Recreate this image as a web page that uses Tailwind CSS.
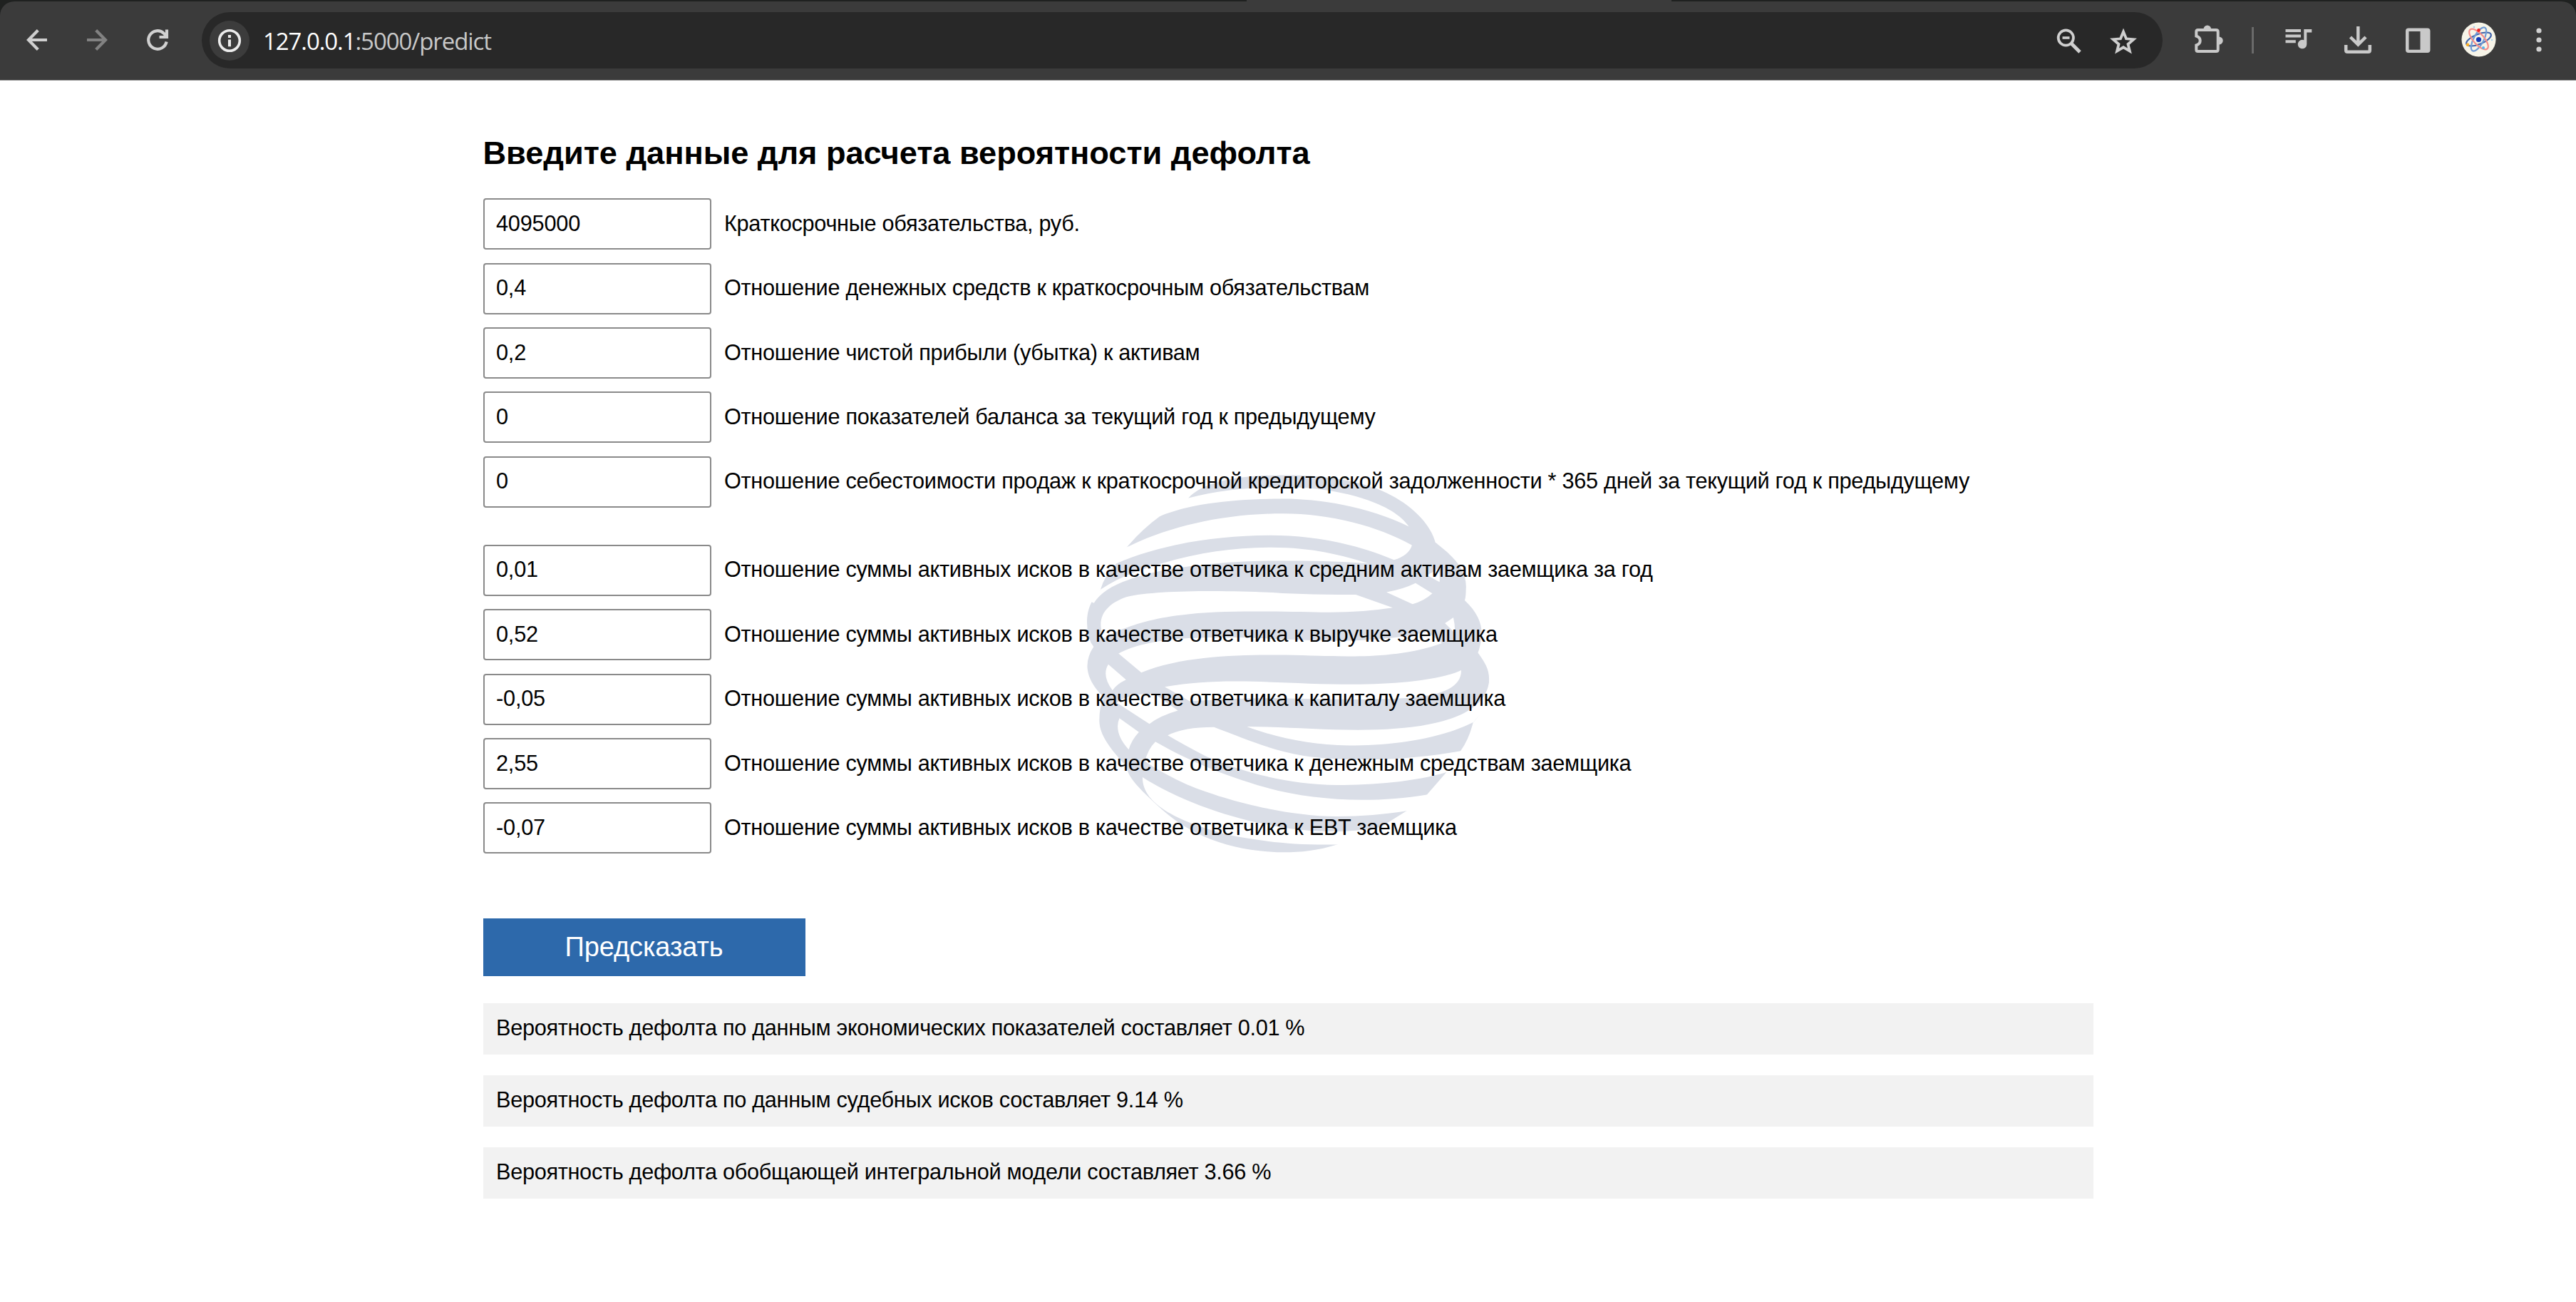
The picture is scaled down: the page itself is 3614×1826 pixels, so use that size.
<!DOCTYPE html>
<html lang="ru">
<head>
<meta charset="utf-8">
<title>127.0.0.1:5000/predict</title>
<script src="https://cdn.jsdelivr.net/npm/@tailwindcss/browser@4"></script>
</head>
<body class="bg-white text-black font-['Liberation_Sans',Arial,sans-serif] overflow-hidden">
<div class="relative w-[3614px] h-[1826px] overflow-hidden">

<!-- Browser toolbar -->
<header class="h-[113px] bg-[#1f2120]">
  <div class="h-[2px] flex"><div class="ml-[1749px] w-[596px] bg-[#3b3b3b]"></div></div>
  <div class="h-[111px] bg-[#3b3b3b] rounded-t-[20px] border-b border-[#8a8a8a] flex items-start pt-[15px] text-[#c9c9c9]">
    <svg class="ml-[30px] w-[45px] h-[80px] shrink-0" viewBox="30 17 45 80" fill="none" stroke="#d0d0d0" stroke-width="4.2"><path d="M66 56H41M53.3 42.5L40 56L53.3 69.5"/></svg>
    <svg class="ml-[40px] w-[45px] h-[80px] shrink-0" viewBox="115 17 45 80" fill="none" stroke="#828282" stroke-width="4.2"><path d="M122 56H147M134.7 42.5L148 56L134.7 69.5"/></svg>
    <svg class="ml-[40px] w-[50px] h-[80px] shrink-0" viewBox="200 17 50 80" fill="none" stroke="#d0d0d0" stroke-width="4.2"><path d="M233.6 58.5A12.8 12.8 0 1 1 229.8 46.7L234 51.5M234 41.5V52H223.500"/></svg>

    <div class="ml-[32.500px] w-[2751px] h-[79px] rounded-full bg-[#282828] flex items-center shrink-0">
      <div class="ml-[11.500px] size-[56px] rounded-full bg-[#3c3c3c] shrink-0">
        <svg class="size-[56px]" viewBox="0 0 56 56"><circle cx="28" cy="28" r="14.300" fill="none" stroke="#ececec" stroke-width="3.600"/><path d="M26 26.500h4v9.800h-4zM26 20h4v4h-4z" fill="#ececec"/></svg>
      </div>
      <div class="ml-[19px] pt-[2px] text-[33px] leading-[40px] tracking-[-1.080px] font-['Open_Sans',sans-serif] text-[#c8c8c8] whitespace-nowrap"><span class="text-white">127.0.0.1</span>:5000/predict</div>
      <svg class="ml-auto w-[50px] h-[79px] shrink-0" viewBox="2880 17 50 79" fill="none" stroke="#cfcfcf"><circle cx="2898.300" cy="53" r="10.600" stroke-width="3.800"/><path d="M2906 61L2918 73" stroke-width="5"/><path d="M2893.500 53h10" stroke-width="3.600"/></svg>
      <svg class="ml-[24px] mr-[30px] w-[50px] h-[79px] shrink-0" viewBox="2954 17 50 79" fill="none" stroke="#cfcfcf" stroke-width="3.800"><path d="M2979 44.500L2983 54.300L2993.300 55.200L2985.500 62L2987.900 71.600L2979 66.300L2970.100 71.600L2972.500 62L2964.700 55.200L2975 54.300Z"/></svg>
    </div>

    <svg class="ml-[40.500px] w-[50px] h-[80px] shrink-0" viewBox="3074 17 50 80"><path d="M3083.500 42H3109Q3111.700 42 3111.700 44.500V69.500Q3111.700 72 3109 72H3083.500Q3081.300 72 3081.300 69.500V63.500C3088.500 61 3088.500 53 3081.300 50.500V44.500Q3081.300 42 3083.500 42Z" fill="none" stroke="#c9c9c9" stroke-width="4"/><path d="M3091.500 41a5.300 5.600 0 0 1 10.600 0ZM3113 51.500a5.700 5.500 0 0 1 0 11Z" fill="#c9c9c9"/></svg>
    <div class="ml-[35px] mt-[21px] w-[2.500px] h-[37px] bg-[#6a6a6a] shrink-0"></div>
    <svg class="ml-[38.500px] w-[50px] h-[80px] shrink-0" viewBox="3200 17 50 80" fill="#c9c9c9"><path d="M3206.500 41h21.500v4h-21.500zM3206.500 48.600h21.500v4h-21.500zM3206.500 56.200h14.300v4h-14.300zM3232.300 41h11v4.500h-7V62a6.300 6.300 0 1 1-4-5.800z"/></svg>
    <svg class="ml-[34px] w-[50px] h-[80px] shrink-0" viewBox="3284 17 50 80" fill="none" stroke="#c9c9c9" stroke-width="4.500"><path d="M3308.300 37V61M3297.500 52L3308.300 62.500L3319 52M3291.200 63V70.500Q3291.200 72.800 3293.500 72.800H3322.500Q3324.800 72.800 3324.800 70.500V63"/></svg>
    <svg class="ml-[36px] w-[46px] h-[80px] shrink-0" viewBox="3370 17 46 80" fill="#c9c9c9"><path fill-rule="evenodd" d="M3379 39.500H3405.500Q3409.500 39.500 3409.500 43.500V70Q3409.500 74 3405.500 74H3379Q3375 74 3375 70V43.500Q3375 39.500 3379 39.500ZM3379.500 44V69.700H3395.500V44Z"/></svg>
    <svg class="ml-[36px] w-[52px] h-[80px] shrink-0" viewBox="3452 17 52 80" fill="none" stroke-width="2.200"><circle cx="3477.500" cy="55.500" r="24" fill="#f6f4e8"/><ellipse cx="3477.500" cy="55" rx="18.500" ry="7" transform="rotate(-22 3477.500 55)" stroke="#3f63ab"/><ellipse cx="3477.500" cy="55" rx="18.500" ry="7" transform="rotate(-62 3477.500 55)" stroke="#6f9bd6"/><ellipse cx="3477.500" cy="55" rx="18" ry="7.500" transform="rotate(48 3477.500 55)" stroke="#f58e8a"/><circle cx="3477.500" cy="55.500" r="3.600" fill="#1238b8"/><circle cx="3477.500" cy="42.500" r="2.400" fill="#f02424"/><circle cx="3462" cy="62.700" r="2.300" fill="#fbb026"/><circle cx="3484" cy="67" r="2" fill="#55b4ec"/><circle cx="3471" cy="38" r="1.300" fill="#a9c8ee"/><circle cx="3496" cy="56" r="1.200" fill="#9fd0f0"/></svg>
    <svg class="ml-[46px] w-[24px] h-[80px] shrink-0" viewBox="3550 17 24 80" fill="#d0d0d0"><circle cx="3562" cy="43" r="3.600"/><circle cx="3562" cy="56" r="3.600"/><circle cx="3562" cy="69" r="3.600"/></svg>
  </div>
</header>

<!-- Globe watermark -->
<svg class="absolute left-[1480px] top-[620px] w-[660px] h-[600px]" viewBox="0 0 1568 1568" preserveAspectRatio="none" fill="#fff">
  <path fill="#dadee7" d="M445 205C490 150 600 122 740 122C900 118 1040 145 1120 195C1200 240 1255 310 1268 368C1330 420 1375 470 1370 540Q1370 565 1366 580C1410 625 1425 670 1422 710Q1418 750 1410 772C1435 810 1448 835 1447 870C1447 950 1420 1000 1394 1027Q1380 1090 1352 1132L1305 1210L1240 1292L1172 1352L1080 1415L940 1475C870 1500 800 1505 740 1503C560 1495 440 1430 350 1340C280 1270 240 1225 240 1190C180 1120 148 1070 148 1020Q148 970 163 935C120 890 108 850 108 820Q108 785 129 750Q107 720 107 662C107 600 130 570 152 540Q165 490 205 445L240 385Q290 320 350 272Z"/>
  <path d="M445 205C560 170 700 162 800 166C960 172 1130 225 1180 310C1040 235 880 208 760 208C600 208 450 225 350 272L320 240L430 180Z"/>
  <path d="M240 385C380 310 560 262 760 262C920 262 1080 310 1190 378Q1180 415 1130 432C1000 370 850 342 720 342C540 342 350 375 205 445L180 430Z"/>
  <path d="M152 540C220 490 300 460 364 442C480 405 600 386 720 386C860 386 960 415 1045 445C970 438 860 434 760 435C680 435 600 438 538 445C440 455 330 470 245 505C190 525 150 555 130 590L110 580Z"/>
  <path d="M153 675C150 620 190 585 240 567C340 540 620 543 774 555Q890 561 1003 559L1126 607Q1020 625 906 624C800 624 560 612 423 634C330 645 260 670 212 692Q180 707 158 722Z"/>
  <path d="M1202 517L1258 555Q1230 583 1192 594L1105 550Q1160 540 1202 517ZM1240 488Q1262 477 1278 462Q1284 490 1282 513ZM1300 664L1328 643Q1334 670 1333 700Z"/>
  <path d="M212 775C260 745 350 722 467 718C620 710 760 725 900 728C1030 730 1150 720 1240 695L1290 737C1200 775 1080 785 1000 785C900 786 820 780 740 780C600 780 420 785 288 845Z"/>
  <path d="M178 815L237 871Q205 888 192 910Q155 855 178 815ZM215 1012L280 1063Q255 1092 246 1127Q195 1065 215 1012ZM206 955Q250 918 335 925L410 984Q350 1003 315 1033Q255 990 206 955Z"/>
  <path d="M366 897C450 882 520 877 599 877C700 876 850 888 994 888C1150 888 1290 870 1354 836C1356 880 1320 915 1240 930C1150 945 1050 943 950 943C850 943 720 935 599 941Q520 945 450 950Z"/>
  <path d="M640 1043C760 1043 880 1055 1010 1055C1250 1055 1430 1010 1447 880L1500 900L1394 1027C1280 1090 1120 1112 980 1112C850 1112 730 1080 640 1043Z"/>
  <path d="M376 1075Q430 1045 530 1045C640 1090 720 1130 830 1150C950 1170 1150 1172 1352 1132L1400 1180L1305 1210C1200 1245 1060 1257 940 1257C780 1255 620 1210 500 1150Q430 1110 376 1075Z"/>
  <path d="M335 1098C450 1170 560 1220 700 1265C860 1315 1060 1325 1240 1292L1280 1340L1172 1352C1100 1365 1020 1372 940 1372C760 1370 560 1310 440 1255Q360 1215 300 1170Q310 1125 335 1098Z"/>
  <path d="M292 1228C400 1305 560 1370 700 1400C800 1425 950 1440 1080 1412L1120 1440L940 1475C800 1478 700 1465 580 1440C420 1395 290 1330 292 1228Z"/>
</svg>

<!-- Prediction form -->
<main class="relative w-[2259px] ml-[677.500px] pt-[71.500px]">
  <h1 class="h-[60px] text-[45.2px] leading-[60px] tracking-[-0.040px] font-bold whitespace-nowrap">Введите данные для расчета вероятности дефолта</h1>
  <form class="mt-[33.500px]">
    <div id="economic" class="flex flex-col gap-[18.150px]"></div>
    <div id="claims" class="mt-[51.500px] flex flex-col gap-[18.150px]"></div>
    <button type="button" class="mt-[90px] block w-[452px] h-[81px] bg-[#2d69ab] text-white text-[38px] leading-[78px] tracking-[-0.100px] pb-[1px]">Предсказать</button>
  </form>
  <section id="results" class="mt-[38px] flex flex-col gap-[29.300px]"></section>
</main>
</div>

<script>
const economic = [
  ["4095000", "Краткосрочные обязательства, руб."],
  ["0,4", "Отношение денежных средств к краткосрочным обязательствам"],
  ["0,2", "Отношение чистой прибыли (убытка) к активам"],
  ["0", "Отношение показателей баланса за текущий год к предыдущему"],
  ["0", "Отношение себестоимости продаж к краткосрочной кредиторской задолженности * 365 дней за текущий год к предыдущему"]
];
const claims = [
  ["0,01", "Отношение суммы активных исков в качестве ответчика к средним активам заемщика за год"],
  ["0,52", "Отношение суммы активных исков в качестве ответчика к выручке заемщика"],
  ["-0,05", "Отношение суммы активных исков в качестве ответчика к капиталу заемщика"],
  ["2,55", "Отношение суммы активных исков в качестве ответчика к денежным средствам заемщика"],
  ["-0,07", "Отношение суммы активных исков в качестве ответчика к EBT заемщика"]
];
const results = [
  "Вероятность дефолта по данным экономических показателей составляет 0.01 %",
  "Вероятность дефолта по данным судебных исков составляет 9.14 %",
  "Вероятность дефолта обобщающей интегральной модели составляет 3.66 %"
];
const field = ([value, label]) => `
  <label class="flex items-center h-[72.300px] text-[30.700px] leading-[36px] whitespace-nowrap">
    <input type="text" value="${value}" class="w-[320px] h-[72px] shrink-0 rounded-[4px] border-2 border-[#8a8a8a] bg-white pl-[16.500px] pb-[1px] tracking-[-0.200px]">
    <span class="ml-[18.500px] pb-[1px] tracking-[-0.290px]">${label}</span>
  </label>`;
document.getElementById("economic").innerHTML = economic.map(field).join("");
document.getElementById("claims").innerHTML = claims.map(field).join("");
document.getElementById("results").innerHTML = results.map(t => `<p class="h-[72px] bg-[#f2f2f2] pl-[18.500px] text-[30.700px] leading-[70px] tracking-[-0.310px] whitespace-nowrap">${t}</p>`).join("");
</script>
</body>
</html>
